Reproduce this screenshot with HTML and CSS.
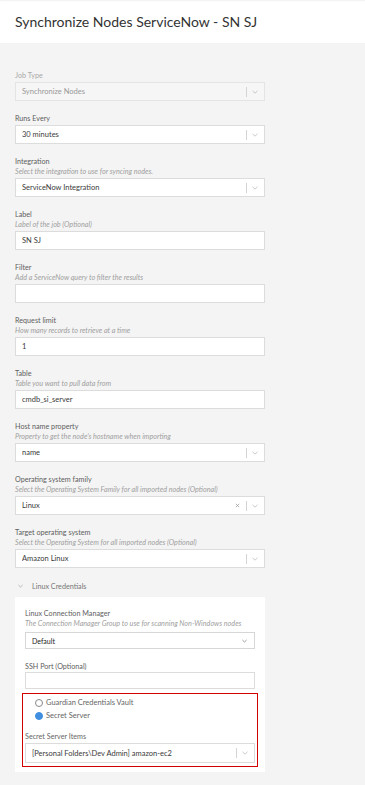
FILE: index.html
```html
<!DOCTYPE html>
<html lang="en">
<head>
	<meta charset="UTF-8">
	<meta name="viewport" content="width=device-width">
	<title>Synchronize Nodes ServiceNow - SN SJ</title>
	<link rel="stylesheet" href="styles.css">
</head>
<body>

<header class="page-head">
	<h1>Synchronize Nodes ServiceNow - SN SJ</h1>
</header>

<main class="job-form">

	<div class="field disabled">
		<div class="label">Job Type</div>
		<div class="select">
			<span class="value">Synchronize Nodes</span>
			<span class="divider"></span>
			<svg class="chev" viewBox="0 0 6 4"><polyline points="0.5,0.8 3,3.2 5.5,0.8"/></svg>
		</div>
	</div>

	<div class="field">
		<div class="label">Runs Every</div>
		<div class="select">
			<span class="value">30 minutes</span>
			<span class="divider"></span>
			<svg class="chev" viewBox="0 0 6 4"><polyline points="0.5,0.8 3,3.2 5.5,0.8"/></svg>
		</div>
	</div>

	<div class="field">
		<div class="label">Integration</div>
		<div class="desc">Select the integration to use for syncing nodes.</div>
		<div class="select">
			<span class="value">ServiceNow Integration</span>
			<span class="divider"></span>
			<svg class="chev" viewBox="0 0 6 4"><polyline points="0.5,0.8 3,3.2 5.5,0.8"/></svg>
		</div>
	</div>

	<div class="field">
		<div class="label">Label</div>
		<div class="desc">Label of the job (Optional)</div>
		<div class="input">SN SJ</div>
	</div>

	<div class="field">
		<div class="label">Filter</div>
		<div class="desc">Add a ServiceNow query to filter the results</div>
		<div class="input"></div>
	</div>

	<div class="field">
		<div class="label">Request limit</div>
		<div class="desc">How many records to retrieve at a time</div>
		<div class="input">1</div>
	</div>

	<div class="field">
		<div class="label">Table</div>
		<div class="desc">Table you want to pull data from</div>
		<div class="input">cmdb_si_server</div>
	</div>

	<div class="field">
		<div class="label">Host name property</div>
		<div class="desc">Property to get the node's hostname when importing</div>
		<div class="select">
			<span class="value">name</span>
			<span class="divider"></span>
			<svg class="chev" viewBox="0 0 6 4"><polyline points="0.5,0.8 3,3.2 5.5,0.8"/></svg>
		</div>
	</div>

	<div class="field">
		<div class="label">Operating system family</div>
		<div class="desc">Select the Operating System Family for all imported nodes (Optional)</div>
		<div class="select">
			<span class="value">Linux</span>
			<svg class="clear" viewBox="0 0 6 6"><path d="M1 1L5 5M5 1L1 5"/></svg>
			<span class="divider"></span>
			<svg class="chev" viewBox="0 0 6 4"><polyline points="0.5,0.8 3,3.2 5.5,0.8"/></svg>
		</div>
	</div>

	<div class="field">
		<div class="label">Target operating system</div>
		<div class="desc">Select the Operating System for all imported nodes (Optional)</div>
		<div class="select">
			<span class="value">Amazon Linux</span>
			<span class="divider"></span>
			<svg class="chev" viewBox="0 0 6 4"><polyline points="0.5,0.8 3,3.2 5.5,0.8"/></svg>
		</div>
	</div>

	<div class="section-toggle">
		<svg class="chev" viewBox="0 0 6 4"><polyline points="0.5,0.8 3,3.2 5.5,0.8"/></svg>
		<span>Linux Credentials</span>
	</div>

	<section class="cred-panel">
		<div class="field">
			<div class="label">Linux Connection Manager</div>
			<div class="desc">The Connection Manager Group to use for scanning Non-Windows nodes</div>
			<div class="native-select">
				<span class="value">Default</span>
				<svg class="chev" viewBox="0 0 6 4"><polyline points="0.5,0.8 3,3.2 5.5,0.8"/></svg>
			</div>
		</div>

		<div class="field ssh">
			<div class="label">SSH Port (Optional)</div>
			<div class="input small"></div>
		</div>

		<div class="highlight">
			<label class="radio"><span class="dot"></span>Guardian Credentials Vault</label>
			<label class="radio"><span class="dot on"></span>Secret Server</label>
			<div class="label items-label">Secret Server Items</div>
			<div class="select">
				<span class="value">[Personal Folders\Dev Admin] amazon-ec2</span>
				<span class="divider"></span>
				<svg class="chev" viewBox="0 0 6 4"><polyline points="0.5,0.8 3,3.2 5.5,0.8"/></svg>
			</div>
		</div>
	</section>

</main>

</body>
</html>
```

FILE: styles.css
```css
html, body {
	margin: 0;
	padding: 0;
}

body {
	background: #f4f4f4;
	font-family: Lato, "Open Sans", sans-serif;
	color: #333;
}

.page-head {
	background: #fff;
	height: 43px;
	box-shadow: inset 0 2px 2px -1px rgba(0,0,0,0.06);
	padding: 0 15px;
	display: flex;
	align-items: center;
}

.page-head h1 {
	margin: 0;
	font-size: 14px;
	font-weight: 400;
	color: #333;
}

.job-form {
	width: 250px;
	padding: 28px 15px 13px;
}

.field {
	margin-bottom: 13px;
}

.label {
	font-size: 7.2px;
	line-height: 10px;
	color: #5e5e5e;
	margin-bottom: 1px;
}

.desc {
	font-size: 7.2px;
	line-height: 10px;
	font-style: italic;
	color: #a0a0a0;
	margin-top: -1px;
	margin-bottom: 1px;
}

.select,
.input,
.native-select {
	box-sizing: border-box;
	height: 19px;
	background: #fff;
	border: 1px solid #dcdcdc;
	display: flex;
	align-items: center;
	padding-left: 6px;
	font-size: 7.5px;
	color: #3a3a3a;
}

.select .value,
.native-select .value {
	flex: 1;
	white-space: nowrap;
	overflow: hidden;
}

.select .divider {
	width: 1px;
	height: 10px;
	background: #d4d4d4;
}

.select .chev {
	width: 6px;
	height: 4px;
	margin: 0 6px 0 5px;
	fill: none;
	stroke: #bbb;
	stroke-width: 0.8;
}

.select .clear {
	width: 5px;
	height: 5px;
	margin-right: 6px;
	fill: none;
	stroke: #999;
	stroke-width: 0.9;
}

.disabled .label {
	color: #aaa;
}

.disabled .select {
	background: #f6f6f6;
	border-color: #e4e4e4;
	color: #999;
}

.section-toggle {
	display: flex;
	align-items: center;
	height: 10px;
	font-size: 7.2px;
	color: #777;
	margin-bottom: 6px;
}

.section-toggle .chev {
	width: 5px;
	height: 4px;
	margin: 0 9px 0 3px;
	fill: none;
	stroke: #999;
	stroke-width: 0.8;
}

.cred-panel {
	background: #fff;
	padding: 12px 10px 5px;
}

.cred-panel .desc {
	margin-bottom: 3px;
}

.cred-panel .field {
	margin-bottom: 13px;
}

.native-select {
	height: 17px;
	border-color: #d6d6d6;
	font-size: 7px;
	color: #222;
}

.native-select .chev {
	width: 5px;
	height: 4px;
	margin-right: 7px;
	fill: none;
	stroke: #777;
	stroke-width: 0.9;
}

.input.small {
	height: 17px;
}

.cred-panel .field.ssh {
	margin-bottom: 4px;
}

.ssh .label {
	margin-bottom: 0;
}

.highlight {
	margin: 0 -3px;
	padding: 2px 2px 3px;
	border: 1px solid #d40000;
}

.radio {
	display: flex;
	align-items: center;
	height: 13px;
	padding-left: 10px;
	font-size: 7.5px;
	color: #666;
}

.radio .dot {
	box-sizing: border-box;
	width: 8px;
	height: 8px;
	border-radius: 50%;
	border: 1px solid #888;
	margin-right: 3px;
	background: #fff;
}

.radio .dot.on {
	border-color: #3f8ee0;
	background: #3f8ee0;
}

.items-label {
	margin-top: 10px;
	color: #666;
}

.highlight .select {
	height: 20px;
}
```
